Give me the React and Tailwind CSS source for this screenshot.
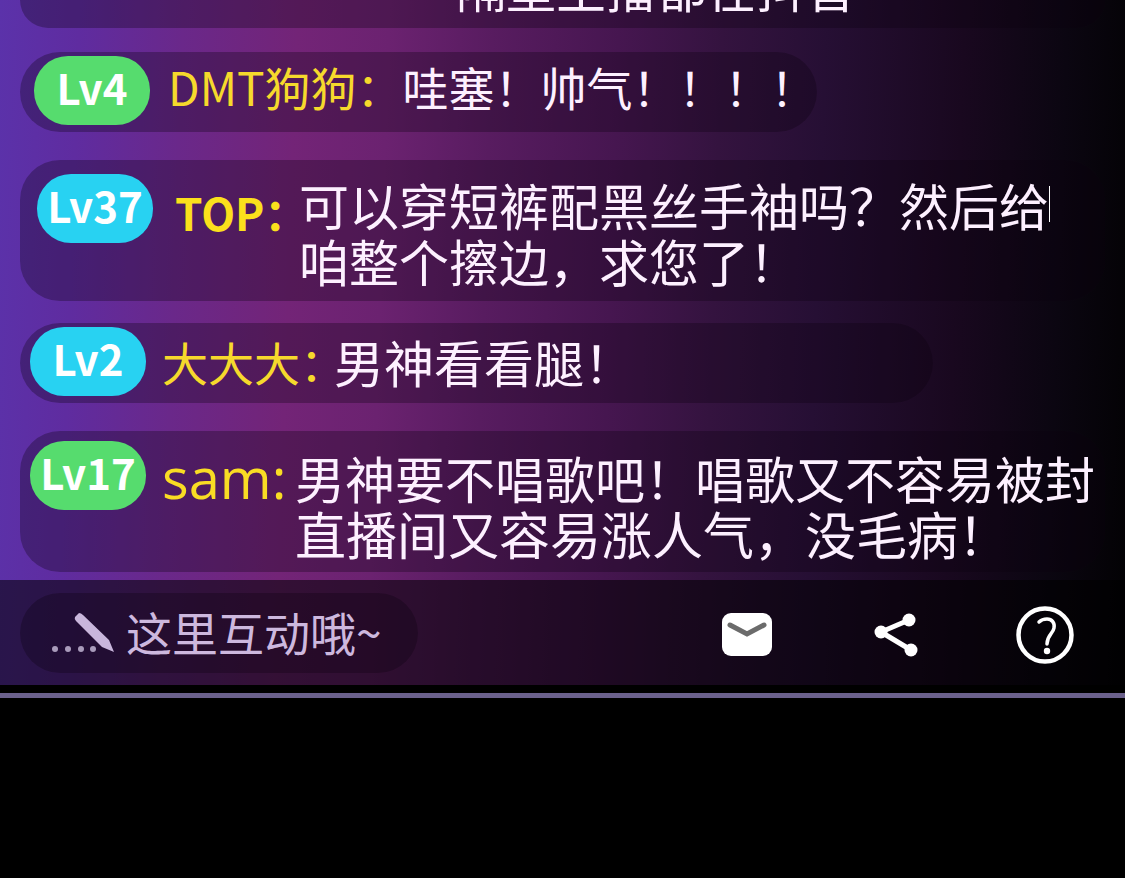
import React, { useState } from 'react';

const badgeColors = {
  green: 'bg-[#56dc6e]',
  blue: 'bg-[#28d2f2]',
};

// 等级徽章
const LevelBadge = ({ level, color }) => (
  <span
    className={`flex h-[69px] w-[116px] shrink-0 items-center justify-center rounded-[34px] pb-2 text-[42px] leading-none font-bold whitespace-nowrap text-white ${badgeColors[color]}`}
  >
    Lv{level}
  </span>
);

// 聊天气泡
const Bubble = ({ className = '', children }) => (
  <li className={`flex items-start rounded-[40px] bg-[#0a000c]/30 ${className}`}>{children}</li>
);

const IconButton = ({ label, children }) => (
  <button type="button" aria-label={label} className="flex size-16 items-center justify-center rounded-full text-white">
    {children}
  </button>
);

const App = () => {
  const [message, setMessage] = useState('');

  return (
    <div
      lang="zh-CN"
      className="min-h-screen overflow-hidden bg-black font-['Noto_Sans_CJK_SC',sans-serif] text-[#fdf0ff]"
    >
      <main className="bg-[linear-gradient(92deg,#5b32aa_0%,#5f2ca0_7%,#6a288a_16%,#732477_26%,#6b2270_34%,#581c60_43%,#461650_54%,#34133f_63%,#260f34_72%,#19081f_84%,#0b0611_93%,#030204_100%)]">
        <ul className="flex flex-col pr-5 pb-2 pl-5">
          {/* 上一条消息，只露出底部 */}
          <li className="flex h-7 items-end rounded-b-[40px] bg-[#0a000c]/30 pb-3.5 pl-[436px]">
            <p className="text-[50px] leading-[56px] whitespace-nowrap">隔壁主播都在抖音</p>
          </li>

          <Bubble className="mt-6 h-20 w-fit pt-1 pl-3.5">
            <LevelBadge level={4} color="green" />
            <p className="ml-[18px] text-[46px] leading-[60px] whitespace-nowrap">
              <span className="text-[#f6d92c]">DMT狗狗：</span>
              哇塞！帅气！！！！
            </p>
          </Bubble>

          <Bubble className="mt-7 h-[141px] pt-3.5 pl-[17px]">
            <LevelBadge level={37} color="blue" />
            <span className="mt-2 ml-[22px] w-[124px] text-[44px] leading-[60px] font-bold whitespace-nowrap text-[#fbe01c]">
              TOP：
            </span>
            <p className="mt-0.5 text-[50px] leading-[56px] whitespace-nowrap">
              <span className="flex items-center">
                可以穿短裤配黑丝手袖吗？然后给
                <span className="h-9 w-px bg-white" />
              </span>
              咱整个擦边，求您了！
            </p>
          </Bubble>

          <Bubble className="mt-[22px] mr-[172px] h-20 pt-1 pl-2.5">
            <LevelBadge level={2} color="blue" />
            <span className="ml-4 text-[46px] leading-[68px] whitespace-nowrap text-[#f6d92c]">大大大：</span>
            <p className="-ml-3 text-[50px] leading-[68px] whitespace-nowrap">男神看看腿！</p>
          </Bubble>

          <Bubble className="mt-7 h-[141px] pt-2.5 pl-2.5">
            <LevelBadge level={17} color="green" />
            <span className="ml-4 w-[133px] font-['Open_Sans',sans-serif] text-[56px] leading-[72px] font-medium whitespace-nowrap text-[#f9dc24]">
              sam:
            </span>
            <p className="mt-2 text-[50px] leading-[56px] whitespace-nowrap">
              男神要不唱歌吧！唱歌又不容易被封
              <br />
              <span className="text-[51px]">直播间又容易涨人气，没毛病！</span>
            </p>
          </Bubble>
        </ul>

        {/* 底部互动栏 */}
        <footer className="flex h-[105px] items-center justify-between bg-black/55 pr-12 pl-5">
          <label className="flex h-20 w-[398px] items-center rounded-full bg-[#0a000c]/30 pl-8">
            <svg viewBox="0 0 64 42" className="h-[42px] w-16 shrink-0" aria-hidden="true">
              <g fill="#a99bbb">
                <circle cx="3" cy="37" r="3" />
                <circle cx="16" cy="37" r="3" />
                <circle cx="29" cy="37" r="3" />
                <circle cx="41" cy="37" r="3" />
              </g>
              <path d="M23 5 L27 1 Q29 1 31 3 L57 28 L62 40 L50 35 L24 9 Q22 7 23 5Z" fill="#c9b6dc" />
            </svg>
            <input
              type="text"
              aria-label="互动"
              placeholder="这里互动哦~"
              value={message}
              onChange={(e) => setMessage(e.target.value)}
              className="ml-2.5 w-0 flex-1 bg-transparent pb-1 text-[46px] leading-[64px] outline-none placeholder:text-[#cdb8de]"
            />
          </label>
          <div className="flex items-center gap-[85px] pt-1">
            <IconButton label="私信">
              <svg viewBox="0 0 50 43" className="h-[43px] w-[50px]">
                <rect width="50" height="43" rx="9" fill="#fff" />
                <path d="M8 12 L25 21 L42 12" fill="none" stroke="#6b6b6b" strokeWidth="5" strokeLinecap="round" />
              </svg>
            </IconButton>
            <IconButton label="分享">
              <svg viewBox="0 0 44 44" className="size-11">
                <path d="M35 7 L7 19 L37 37" fill="none" stroke="#fff" strokeWidth="5" />
                <g fill="#fff">
                  <circle cx="35" cy="7" r="6.5" />
                  <circle cx="7" cy="19" r="6.5" />
                  <circle cx="37" cy="37" r="6.5" />
                </g>
              </svg>
            </IconButton>
            <IconButton label="帮助">
              <svg viewBox="0 0 58 58" className="size-[58px]" fill="none" stroke="#fff">
                <circle cx="29" cy="29" r="26.500" strokeWidth="4.5" />
                <path d="M23 16 C26 13 29 13 31 13 C36 13 39 17 38 22 C37 28 31 29 31 38" strokeWidth="3.5" strokeLinecap="round" />
                <circle cx="31" cy="45" r="3.2" fill="#fff" stroke="none" />
              </svg>
            </IconButton>
          </div>
        </footer>
      </main>
      <div className="mt-2 h-[5px] bg-[#6b618c]" />
    </div>
  );
};

export default App;
